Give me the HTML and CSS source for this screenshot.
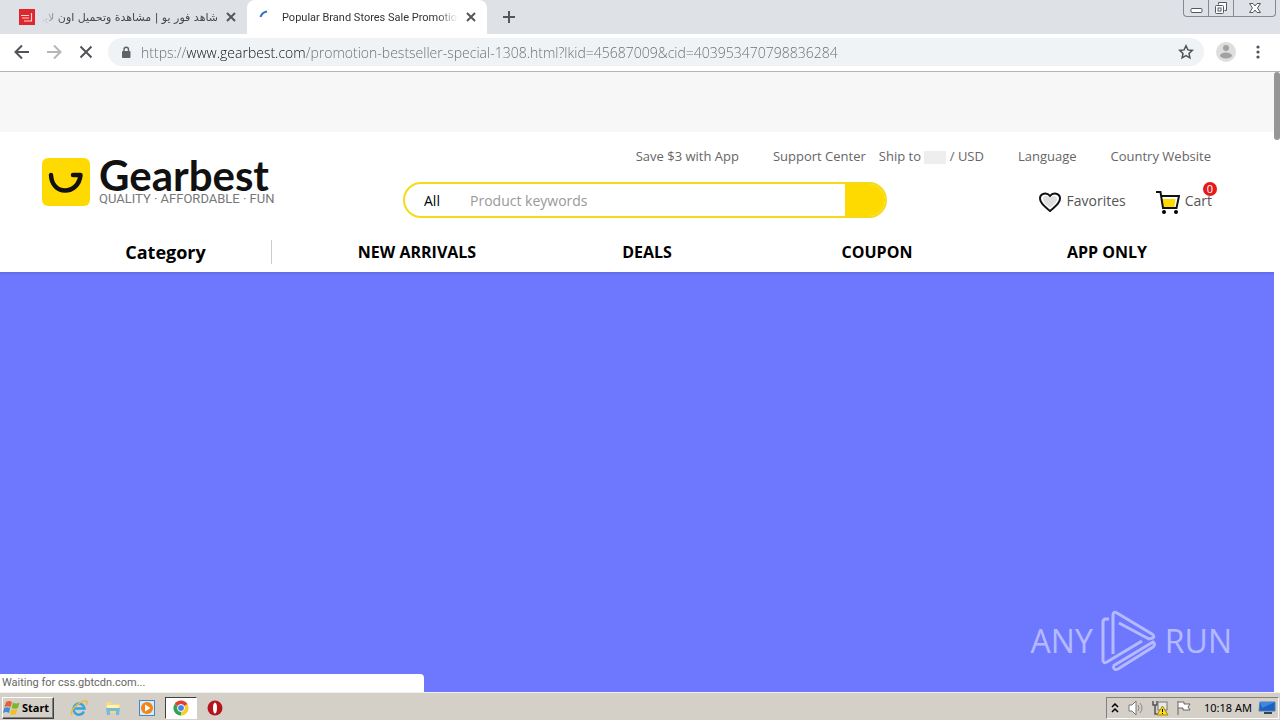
FILE: index.html
```html
<!DOCTYPE html>
<html lang="en">
<head>
    <meta charset="UTF-8">
    <meta name="viewport" content="width=device-width, initial-scale=1.0">
    <title>Popular Brand Stores Sale Promotion</title>
    <link rel="stylesheet" href="styles.css">
</head>
<body>
    <!-- Browser tabs -->
    <div class="tab-strip">
        <div class="tab">
            <svg class="favicon" viewBox="0 0 16 16"><rect width="16" height="16" fill="#e0262d"/><path d="M2 6.500h8M3 9h7M5 12h8M12.500 4v8" stroke="#fff" stroke-width="1.200" fill="none" opacity=".8"/></svg>
            <span class="tab-title rtl" dir="rtl">شاهد فور يو | مشاهدة وتحميل اون لاين</span>
            <button class="tab-close" aria-label="Close tab"><svg viewBox="0 0 10 10"><path d="M1 1l8 8M9 1l-8 8"/></svg></button>
        </div>
        <div class="tab active">
            <svg class="favicon" viewBox="0 0 16 16"><path d="M1.500 8A8 8 0 0 1 8 2.500" stroke="#2f6fd0" stroke-width="2" fill="none"/></svg>
            <span class="tab-title">Popular Brand Stores Sale Promotion</span>
            <button class="tab-close" aria-label="Close tab"><svg viewBox="0 0 10 10"><path d="M1 1l8 8M9 1l-8 8"/></svg></button>
        </div>
        <button class="new-tab" aria-label="New tab"><svg viewBox="0 0 12 12"><path d="M6 0v12M0 6h12"/></svg></button>
        <div class="window-buttons">
            <button aria-label="Minimize"><svg width="13" height="14" viewBox="0 0 13 14"><rect x="1" y="7.500" width="11" height="4" rx="1"/></svg></button>
            <button aria-label="Restore"><svg width="14" height="14" viewBox="0 0 14 14"><path d="M4.500 3.500v-2h8v8h-2"/><rect x="1.500" y="4.500" width="8" height="8" rx="1"/><rect x="4" y="7" width="3" height="3"/></svg></button>
            <button class="window-close" aria-label="Close"><svg width="14" height="14" viewBox="0 0 14 14"><path d="M1.500 2.500h3.500l2 2.500 2-2.500h3.500L9.500 7l3 4.500H9L7 9l-2 2.500H1.500L4.500 7z"/></svg></button>
        </div>
    </div>

    <!-- Address bar -->
    <div class="toolbar">
        <button class="tool" aria-label="Back"><svg viewBox="0 0 16 16"><path d="M15 8H2M8 1.500L1.500 8 8 14.500"/></svg></button>
        <button class="tool dim" aria-label="Forward"><svg viewBox="0 0 16 16"><path d="M1 8h13M8 1.500L14.500 8 8 14.500"/></svg></button>
        <button class="tool" aria-label="Stop"><svg viewBox="0 0 16 16"><path d="M2.500 2.500l11 11M13.500 2.500l-11 11"/></svg></button>
        <div class="address">
            <svg class="lock" viewBox="0 0 10 13"><rect x="1" y="5" width="8.500" height="7" rx="1" fill="#5f6368"/><path d="M3 6V3.500a2.200 2.200 0 0 1 4.500 0V6" fill="none" stroke="#5f6368" stroke-width="1.400"/></svg>
            <input class="url" type="text" aria-label="Address" value="https://www.gearbest.com/promotion-bestseller-special-1308.html?lkid=45687009&amp;cid=403953470798836284">
            <button class="star" aria-label="Bookmark"><svg viewBox="0 0 16 16"><path d="M8 1.800l1.900 4.100 4.400.5-3.300 3 .9 4.500L8 11.700l-3.900 2.200.9-4.500-3.300-3 4.400-.5z"/></svg></button>
        </div>
        <button class="profile" aria-label="Profile"><svg viewBox="0 0 20 20"><circle cx="10" cy="10" r="10" fill="#dedede"/><circle cx="10" cy="6" r="3" fill="#a2a2a2"/><ellipse cx="10" cy="13.500" rx="6" ry="3" fill="#a2a2a2"/></svg></button>
        <button class="menu" aria-label="Menu"><svg viewBox="0 0 4 14"><circle cx="2" cy="2" r="1.600"/><circle cx="2" cy="7" r="1.600"/><circle cx="2" cy="12" r="1.600"/></svg></button>
    </div>

    <!-- Page -->
    <div class="viewport">
        <main class="page">
            <div class="banner"></div>
            <header class="header">
                <div class="header-top">
                    <a class="logo" href="#">
                        <svg class="logo-mark" viewBox="0 0 48 48"><rect width="48" height="48" rx="6" fill="#ffda00"/><path d="M9 17C9.500 27 15.500 32.500 23 32.500S37.500 27 38.500 17H31" fill="none" stroke="#111" stroke-width="4.500" stroke-linecap="round" stroke-linejoin="round"/></svg>
                        <span class="logo-text">
                            <span class="logo-name">Gearbest</span>
                            <span class="logo-tag">QUALITY · AFFORDABLE · FUN</span>
                        </span>
                    </a>
                    <div class="header-main">
                        <div class="links">
                            <a href="#">Save $3 with App</a>
                            <a href="#">Support Center</a>
                            <a class="ship" href="#">Ship to <span class="flag"></span> / USD</a>
                            <a href="#">Language</a>
                            <a href="#">Country Website</a>
                        </div>
                        <div class="search-row">
                            <form class="search">
                                <select aria-label="Department"><option>All</option></select>
                                <input type="text" placeholder="Product keywords" aria-label="Search">
                                <button type="button" aria-label="Search"></button>
                            </form>
                            <a class="favorites" href="#">
                                <svg viewBox="0 0 22 20"><path d="M11 19C8 16 1 12 1 6.500 1 1 8 0 11 4c3-4 10-3 10 2.500C21 12 14 16 11 19z" fill="#fff" stroke="#111" stroke-width="2"/><path d="M11 16C8.500 13.500 4 11 4 7c0-3.500 5-4 7-.5C13 3 18 3.500 18 7c0 4-4.500 6.500-7 9z" fill="#dfdfdf"/></svg>
                                Favorites
                            </a>
                            <a class="cart" href="#">
                                <svg viewBox="0 0 24 24"><path d="M5 9h14.500l-1 8H7z" fill="#ffda00"/><path d="M0 2h4.500L7 18h13.500L23 6H5.500" fill="none" stroke="#111" stroke-width="2"/><circle cx="8" cy="22" r="2"/><circle cx="20" cy="22" r="2"/></svg>
                                <span class="cart-label">Cart</span>
                                <span class="badge">0</span>
                            </a>
                        </div>
                    </div>
                </div>
                <nav class="nav">
                    <a class="category" href="#">Category</a>
                    <div class="nav-links">
                        <a href="#">NEW ARRIVALS</a>
                        <a href="#">DEALS</a>
                        <a href="#">COUPON</a>
                        <a href="#">APP ONLY</a>
                    </div>
                </nav>
            </header>
            <div class="hero"></div>
        </main>
        <div class="scrollbar"><div class="thumb"></div></div>
        <div class="watermark">
            <span>ANY</span>
            <svg viewBox="0 0 56 62"><path d="M8 9H5Q2 9 2 12V50Q2 54 6 52L41 31M12 44V5Q12 1 16 3L51 24Q54 26 52 28L48 29L18 13M12 56Q13 61 17 59L52 37Q55 34 52 32L12 56"/></svg>
            <span>RUN</span>
        </div>
        <div class="status">Waiting for css.gbtcdn.com...</div>
    </div>

    <!-- Taskbar -->
    <footer class="taskbar">
        <button class="start">
            <svg viewBox="0 0 18 16"><path d="M3 2q3-2 6 0L7.500 7q-3-1.500-6 0z" fill="#e8602c"/><path d="M10 2.500q3 2 6.500 0L15 8q-3 1.500-6.500 0z" fill="#7cb82f"/><path d="M1.200 8q3-1.500 6 0L6 13q-3-2-6 0z" fill="#3f8fd6"/><path d="M8.500 9q3 1.500 6 0L13 14q-3 1.500-6 0z" fill="#f6bd27"/></svg>
            Start
        </button>
        <div class="quick">
            <button aria-label="Internet Explorer"><svg viewBox="0 0 18 18"><path d="M14 12.500A5.500 5.500 0 1 1 14.500 9.500H5" fill="none" stroke="#35a4de" stroke-width="2.500"/><path d="M2 16C-1 12 9 2 16 2c2 0 1 3 0 4" fill="none" stroke="#efbd35" stroke-width="1.500"/></svg></button>
            <button aria-label="Explorer"><svg viewBox="0 0 18 18"><path d="M2 3h5l1 2h8v9H2z" fill="#f4da7c"/><path d="M3 6h12v3H3z" fill="#fff3b8"/><path d="M2 9h14l-1 7h-3v-4H6v4H3z" fill="#76b9dc"/></svg></button>
            <button aria-label="Media Player"><svg viewBox="0 0 18 18"><rect x="1.500" y="1.500" width="15" height="15" fill="#d7ebfa" stroke="#4489bf"/><circle cx="9" cy="9" r="6" fill="#f38415"/><path d="M7 5.500l5.500 3.500L7 12.500z" fill="#fff"/></svg></button>
            <button class="pressed" aria-label="Chrome"><svg viewBox="0 0 18 18"><path d="M9 9L2.500 5.200A7.500 7.500 0 0 1 15.500 5.200z" fill="#e43e2f"/><path d="M9 9l6.500-3.800A7.500 7.500 0 0 1 9 16.500z" fill="#fbcd2a"/><path d="M9 9v7.500A7.500 7.500 0 0 1 2.500 5.200z" fill="#32a350"/><circle cx="9" cy="9" r="3.500" fill="#4285e8" stroke="#fff"/></svg></button>
            <button aria-label="Opera"><svg viewBox="0 0 18 18"><circle cx="9" cy="9" r="7.500" fill="#b5141b"/><ellipse cx="9" cy="9" rx="2" ry="5.500" fill="#fff"/></svg></button>
        </div>
        <div class="tray">
            <svg class="chevrons" viewBox="0 0 8 10"><path d="M1 4l3-3 3 3M1 9l3-3 3 3" fill="none" stroke="#000" stroke-width="1.500"/></svg>
            <svg viewBox="0 0 18 16"><path d="M2 5h3l4-4v14l-4-4H2z" fill="#fff" stroke="#777"/><path d="M11 5q2 3 0 6M13 3q4 5 0 10" fill="none" stroke="#888"/></svg>
            <svg viewBox="0 0 18 16"><path d="M2 1v4h4V1M4 5v9h4" fill="none" stroke="#555" stroke-width="1.500"/><rect x="7" y="2" width="9" height="8" fill="#e8e8e8" stroke="#777"/><path d="M11.500 6L17 15H6z" fill="#ffdc22" stroke="#a58a00"/><path d="M11.500 9v3M11.500 13v1" stroke="#000"/></svg>
            <svg viewBox="0 0 18 16"><path d="M3 1v14M3 2h6v2h6l-2 3 2 3H8V8H3" fill="#fff" stroke="#666"/></svg>
            <time>10:18 AM</time>
            <svg viewBox="0 0 18 16"><path d="M2 2h15v9H1z" fill="#1c62c0" stroke="#4a7cae"/><path d="M2 2h15L4 8z" fill="#3f87df"/><path d="M6 13h8" stroke="#345" stroke-width="2"/></svg>
        </div>
    </footer>
</body>
</html>
```
FILE: styles.css
```css
* {
    box-sizing: border-box;
}

body {
    margin: 0;
    height: 100vh;
    display: flex;
    flex-direction: column;
    overflow: hidden;
    font-family: "Open Sans", "Noto Sans", sans-serif;
    background: #fff;
}

button {
    border: none;
    padding: 0;
    background: none;
    font: inherit;
    cursor: pointer;
}

a {
    color: inherit;
    text-decoration: none;
}

svg {
    display: block;
    flex-shrink: 0;
}

/* Tabs */
.tab-strip {
    display: flex;
    height: 34px;
    padding-left: 7px;
    background: #dee1e6;
}

.tab {
    display: flex;
    align-items: center;
    width: 240px;
    padding: 0 11px 0 12px;
    color: #45494d;
    font-size: 11px;
}

.tab.active {
    background: #fff;
    border-radius: 8px 8px 0 0;
    color: #333;
    font-family: Roboto, sans-serif;
}

.favicon {
    width: 16px;
    height: 16px;
    margin-right: 7px;
}

.tab-title {
    flex: 1;
    overflow: hidden;
    white-space: nowrap;
    mask-image: linear-gradient(to right, #000 88%, transparent);
}

.tab-title.rtl {
    font-family: "DejaVu Sans", sans-serif;
    mask-image: linear-gradient(to left, #000 88%, transparent);
}

.tab-close {
    width: 10px;
    height: 10px;
    margin-left: 8px;
}

.tab-close svg,
.new-tab svg {
    width: 100%;
    stroke: #53575b;
    stroke-width: 2;
}

.new-tab {
    width: 12px;
    height: 12px;
    margin: 11px 0 0 16px;
}

.window-buttons {
    display: flex;
    height: 17px;
    margin: 0 4px 0 auto;
    border: 1px solid #858991;
    border-top: none;
    border-radius: 0 0 4px 4px;
}

.window-buttons button {
    display: flex;
    align-items: center;
    justify-content: center;
    width: 25px;
    border-right: 1px solid #858991;
}

.window-buttons .window-close {
    width: 41px;
    border-right: none;
}

.window-buttons svg {
    fill: #fff;
    stroke: #555961;
}

/* Toolbar */
.toolbar {
    display: flex;
    align-items: center;
    height: 38px;
    padding: 0 20px 1px 14px;
    border-bottom: 1px solid #b4b4b2;
}

.tool {
    width: 16px;
    height: 16px;
    margin-right: 16px;
}

.tool svg {
    width: 16px;
    fill: none;
    stroke: #505357;
    stroke-width: 2;
}

.tool.dim svg {
    stroke: #b5b7b9;
}

.address {
    flex: 1;
    display: flex;
    align-items: center;
    height: 28px;
    margin: 0 12px 0 -2px;
    padding: 0 10px 0 13px;
    border-radius: 14px;
    background: #f0f3f5;
}

.lock {
    width: 10px;
    height: 13px;
}

.url {
    flex: 1;
    min-width: 0;
    margin-left: 10px;
    padding: 0;
    border: none;
    outline: none;
    font: 300 14px "Open Sans", sans-serif;
    color: transparent;
    background: linear-gradient(to right, #666a6f 46px, #111 46px, #111 165px, #666a6f 165px);
    -webkit-background-clip: text;
    background-clip: text;
}

.star {
    width: 16px;
    height: 16px;
}

.star svg {
    fill: none;
    stroke: #505357;
    stroke-width: 1.5;
}

.profile {
    width: 20px;
    height: 20px;
}

.menu {
    width: 4px;
    height: 14px;
    margin-left: 20px;
    fill: #505357;
}

/* Page */
.viewport {
    position: relative;
    flex: 1;
    min-height: 0;
    display: flex;
}

.page {
    flex: 1;
    display: flex;
    flex-direction: column;
}

.banner {
    height: 60px;
    background: #f7f7f7;
}

.header-top {
    display: flex;
    gap: 131px;
    padding: 0 62px 0 42px;
}

.logo {
    display: flex;
    gap: 9px;
    width: 230px;
    margin-top: 26px;
}

.logo-mark {
    width: 48px;
    height: 48px;
}

.logo-text {
    display: flex;
    flex-direction: column;
    white-space: nowrap;
}

.logo-name {
    font: 700 42px/34px Lato, sans-serif;
    color: #111;
}

.logo-tag {
    font: 13px/13px Roboto, sans-serif;
    color: #777;
}

.header-main {
    flex: 1;
    min-width: 0;
}

.links {
    display: flex;
    justify-content: flex-end;
    gap: 34px;
    padding: 14px 1px 0 0;
    font-size: 13px;
    line-height: 20px;
    color: #666;
    white-space: nowrap;
}

.links .ship {
    margin-left: -21px;
}

.flag {
    display: inline-block;
    width: 22px;
    height: 13px;
    background: #eee;
    vertical-align: middle;
}

.search-row {
    display: flex;
    align-items: center;
    height: 36px;
    margin: 16px 0 14px;
    font-size: 14px;
    color: #555;
}

.search {
    display: flex;
    width: 484px;
    height: 36px;
    margin-right: auto;
    border: 2px solid #f2dc16;
    border-radius: 18px;
    overflow: hidden;
}

.search select {
    appearance: none;
    width: 65px;
    padding: 0 0 0 19px;
    border: none;
    background: none;
    color: #000;
    font: 14px "Open Sans", sans-serif;
}

.search input {
    flex: 1;
    min-width: 0;
    padding: 0;
    border: none;
    outline: none;
    font: 14px "Open Sans", sans-serif;
}

.search input::placeholder {
    color: #999;
}

.search button {
    width: 40px;
    background: #ffda00;
}

.favorites,
.cart {
    display: flex;
    align-items: center;
}

.favorites svg,
.cart svg {
    margin-top: 3px;
}

.favorites {
    gap: 5px;
    margin-right: 30px;
}

.favorites svg {
    width: 22px;
    height: 20px;
}

.cart {
    position: relative;
    gap: 5px;
}

.cart svg {
    width: 24px;
    height: 24px;
}

.badge {
    position: absolute;
    top: -5px;
    right: -5px;
    width: 14px;
    height: 14px;
    border-radius: 50%;
    background: #e31b1b;
    color: #fff;
    font-size: 11px;
    line-height: 14px;
    text-align: center;
}

.nav {
    display: flex;
    align-items: center;
    height: 40px;
    padding: 0 52px 0 60px;
    font-size: 16px;
    font-weight: 700;
    color: #000;
}

.category {
    width: 212px;
    border-right: 1px solid #ccc;
    font-size: 18px;
    line-height: 24px;
    text-align: center;
}

.nav-links {
    flex: 1;
    display: flex;
    margin-left: 30px;
}

.nav-links a {
    flex: 1;
    text-align: center;
}

.hero {
    flex: 1;
    background: linear-gradient(#5f6be8, #6e78ff 4px);
}

.scrollbar {
    width: 6px;
    background: #fff;
}

.thumb {
    height: 68px;
    border-radius: 3px;
    background: #969694;
}

.watermark {
    position: absolute;
    right: 48px;
    bottom: 20px;
    display: flex;
    align-items: center;
    gap: 8px;
    font: 32px/62px "Open Sans", sans-serif;
    color: #b5baff;
}

.watermark svg {
    width: 56px;
    height: 62px;
    fill: none;
    stroke: #b5baff;
    stroke-width: 3;
}

.status {
    position: absolute;
    left: 0;
    bottom: 0;
    width: 424px;
    padding-left: 2px;
    border-radius: 0 4px 0 0;
    background: #fff;
    color: #666;
    font: 11px/18px Roboto, sans-serif;
}

/* Taskbar */
.taskbar {
    display: flex;
    align-items: center;
    height: 28px;
    padding: 2px 1px 0 2px;
    border-top: 1px solid #f3f1eb;
    background: #d4d0c8;
    color: #000;
    font: 11px "Noto Sans", sans-serif;
}

.start {
    display: flex;
    align-items: center;
    gap: 1px;
    width: 52px;
    height: 22px;
    border: 1px solid;
    border-color: #fff #404040 #404040 #fff;
    box-shadow: inset -1px -1px #808080;
    font-weight: 700;
}

.start svg {
    width: 18px;
    height: 16px;
}

.quick {
    display: flex;
    gap: 2px;
    margin-left: 9px;
}

.quick button {
    display: flex;
    align-items: center;
    justify-content: center;
    width: 32px;
    height: 22px;
}

.quick svg {
    width: 18px;
    height: 18px;
}

.quick .pressed {
    border: 1px solid;
    border-color: #404040 #fff #fff #404040;
    background: #fff;
}

.tray {
    display: flex;
    align-items: center;
    gap: 6px;
    height: 22px;
    margin-left: auto;
    padding: 0 2px 0 4px;
    border: 1px solid;
    border-color: #808080 #fff #fff #808080;
    white-space: nowrap;
}

.tray svg {
    width: 18px;
    height: 16px;
}

.tray .chevrons {
    width: 8px;
    height: 10px;
    margin-right: 2px;
}

.tray time {
    margin-left: 5px;
}
```
